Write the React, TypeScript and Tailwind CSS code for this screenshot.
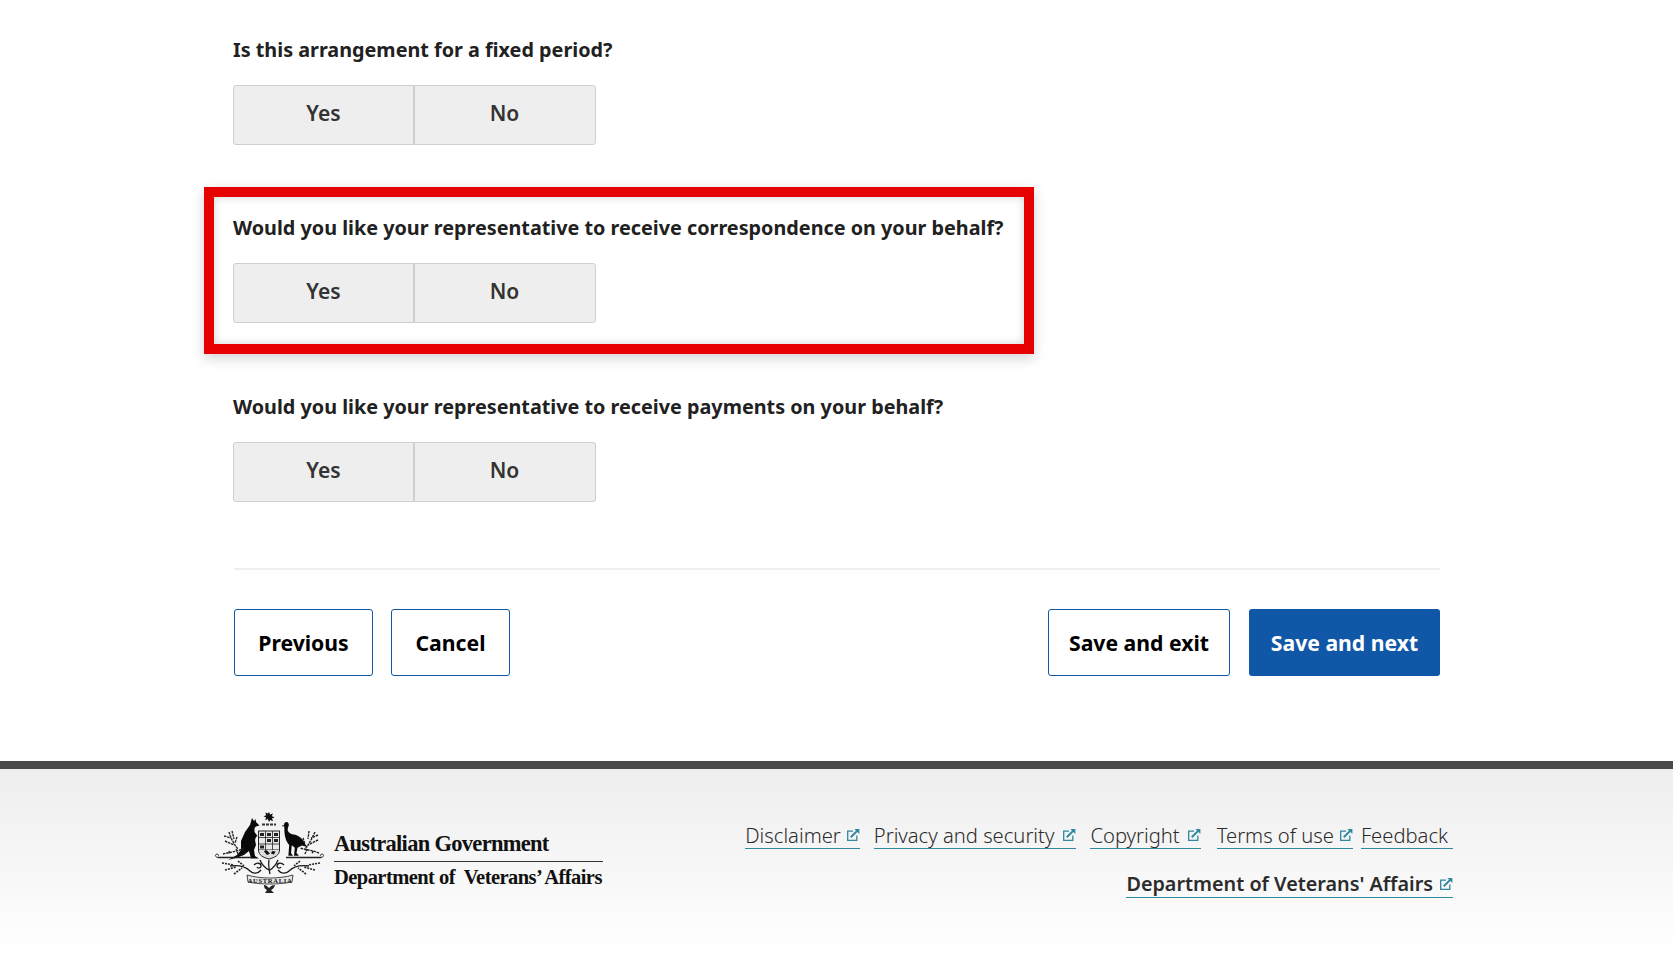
import React from "react";

function ExtIcon({ className = "ml-[6px]" }: { className?: string }) {
  return (
    <svg viewBox="0 0 14 14" className={`inline-block h-[14px] w-[14px] shrink-0 ${className}`} fill="none" stroke="#2f87a0">
      <path d="M7 3.2H1.7v9.1h9.1V7.5" strokeWidth="1.3" />
      <path d="M4.8 9.2 11.6 2.4" strokeWidth="2" />
      <path d="M8.4 1h5v5z" fill="#2f87a0" stroke="none" />
    </svg>
  );
}

function Crest() {
  return (
    <svg viewBox="0 0 120 90" className="h-[90px] w-[120px] shrink-0">
      <path d="M59 7l1.1 2.6 2.7-1.1-.9 2.8 2.7 1-2.6 1.2 1 2.7-2.7-1.1L59 17l-1.2-2.9-2.7 1.1 1-2.7-2.6-1.2 2.7-1-.9-2.8 2.7 1.1z" fill="#111" />
      <path d="M52 19.500h14" stroke="#333" strokeWidth="2" strokeDasharray="3 1" />
      <path d="M42 13L44 16L45.500 14L46 17L49.500 20.500L46 21.500L44.500 23L44.500 27L47.500 31L46 32L45 35L46 40L44 45L45 51L49 53.500L41 53.500L39 46L34 50L26 53L18 55L27 50L31 45L31 36L35 27L40 20Z" fill="#0a0a0a" />
      <path d="M74 20c0-3.200 3.500-4.200 4.600-1.400.8 2-.7 3.200-.9 5.400-.2 2.500 1.200 4 4.300 5.200 5 .4 11 3.500 13 9.800l3 3.200-6-1.800-4.500 2.400-1 5.200 2.500 2.700h-5l.8-8-3-2.400-.8 7.800 2 2.600h-4.600l.8-10.800c-3.400-3.400-5-10.500-4.800-15.500 0-1.400-.1-2.800-.4-3.400z" fill="#0a0a0a" />
      <path d="M75 20.500l-2.800.5" stroke="#0a0a0a" strokeWidth="1" />
      <rect x="48.500" y="26" width="21" height="19" fill="#e8e8e8" stroke="#222" strokeWidth="1" />
      <path d="M48.500 45c0 5 4.500 7.500 10.500 9 6-1.500 10.500-4 10.500-9" fill="#ddd" stroke="#222" />
      <path d="M48.500 32.500h21M48.500 39h21M55.500 26v19M62.500 26v19" stroke="#222" strokeWidth=".8" />
      <path d="M50 28h4v3h-4zM64 28h4v3h-4zM57 34h4v3h-4zM50 40.500h4v3h-4zM64 34h4v3h-4zM57 28h4v3h-4z" fill="#222" />
      <path d="M54 46.500c2-2 3-1 4 0l2 2-3 1.500zM62 46l3.500.5-1.500 3-3-1z" fill="#111" />
      <path d="M8 52.500h34M76 52.500h35" stroke="#222" strokeWidth="1.500" />
      <path d="M8 52.500c-3-.3-3.500-3-1-3.500 1.500 0 2 1.500 1 2.200M111 52.500c3-.3 3.500-3 1-3.500-1.500 0-2 1.500-1 2.200" fill="none" stroke="#222" strokeWidth=".9" />
      <g fill="none" stroke="#222" strokeWidth="1.400" strokeDasharray="2.500 .8">
        <path d="M19 27c2 6 4 11 9 17M15 36l9 4M22 26l2 8M27 32l-2 6M14 31l7 2" />
        <path d="M105 27c-3 6-5 11-10 17M108 35l-10 5M99 26l-1 8M93 33l2 6M108 30l-7 3" />
        <path d="M13 49c7-2 14-2 21-6M26 44l2 5M19 46l1 3" />
        <path d="M109 48c-7-3-13-3-19-5M97 44l-2 5M103 46l-1 3" />
      </g>
      <g fill="none" stroke="#1a1a1a" strokeWidth="1.300">
        <path d="M59 55c-1 5 0 9 1 14M50 55c2 5 5 8 9 10M68 55c-2 5-5 8-8 10" />
        <path d="M20 61c8-1 16 1 20 5 3 3 8 3 11-1M99 61c-8-1-16 1-20 5-3 3-8 3-11-1" />
        <path d="M44 60c3-3 7-2 7 1 0 2-3 3-4 1M74 60c-3-3-7-2-7 1 0 2 3 3 4 1" />
      </g>
      <g fill="none" stroke="#222" strokeWidth="1.600" strokeDasharray="2 1">
        <path d="M12 58l12 2M15 65l11-3M24 69l8-6M28 56l6 5" />
        <path d="M110 58l-12 2M105 65l-11-3M96 69l-8-6M90 56l-6 5" />
      </g>
      <path d="M37 70c7 2 15 3 23 3s16-1 23-3l-1 7c-7 1.500-15 2-22 2s-15-.5-22-2z" fill="#e4e4e4" stroke="#222" strokeWidth=".8" />
      <text x="60" y="77.500" textAnchor="middle" fontSize="6.500" fontFamily="'Liberation Serif', serif" fontWeight="700" letterSpacing=".7" fill="#111">AUSTRALIA</text>
      <path d="M54 80c2 0 3 1 5 3 2-2 3-3 6-3-1 3-2 4-4 5l3 3h-9l2-3c-2-1-3-2-3-5z" fill="#222" />
    </svg>
  );
}

function Question({ title, className = "" }: { title: string; className?: string }) {
  return (
    <div className={`flex flex-col ${className}`}>
      <h3 className="text-[19.8px] leading-[30px] font-bold text-[#212121]">{title}</h3>
      <div className="mt-[20px] flex h-[60px] w-[363px] overflow-hidden rounded-[3px] border border-[#cfcfcf] bg-[#eeeeee] pb-[2px] text-[21px] font-semibold text-[#333333]">
        <span className="-mb-[2px] flex w-[181px] items-center justify-center border-r-2 border-[#cfcfcf] pb-[2px]">Yes</span>
        <span className="flex flex-1 items-center justify-center pr-[1px]">No</span>
      </div>
    </div>
  );
}

function FooterLink({ label, ext = true, className = "", iconClass }: { label: string; ext?: boolean; className?: string; iconClass?: string }) {
  return (
    <a className={`flex h-[27px] items-center border-b border-[#2f87a0] leading-[26px] text-[#2b2b2b] ${className}`}>
      {label}
      {ext && <ExtIcon className={iconClass} />}
    </a>
  );
}

export default function App() {
  return (
    <div className="flex min-h-[957px] w-full flex-col bg-white font-['Noto_Sans','Open_Sans',sans-serif]">
      <main className="ml-[233px] flex w-[1207px] flex-col pt-[35px]">
        <div className="flex flex-col gap-[68px]">
          <Question title="Is this arrangement for a fixed period?" />
          <div className="relative">
            <Question title="Would you like your representative to receive correspondence on your behalf?" />
            <div className="pointer-events-none absolute top-[-26px] left-[-29px] h-[167px] w-[830px] border-[10px] border-[#e60000] shadow-[0_4px_12px_rgba(0,0,0,0.18),inset_0_0_8px_rgba(0,0,0,0.18)]" />
          </div>
          <Question className="mt-[1px]" title="Would you like your representative to receive payments on your behalf?" />
        </div>
        <hr className="mt-[66px] ml-[1px] border-0 border-t-2 border-[#eeeeee]" />
        <div className="mt-[39px] ml-[1px] flex h-[67px] text-[21.2px] font-bold text-black">
          <button className="w-[139px] rounded-[3px] border border-[#1157a7] pt-[1px]">Previous</button>
          <button className="ml-[18px] w-[119px] rounded-[3px] border border-[#1157a7] pt-[1px]">Cancel</button>
          <button className="ml-auto w-[182px] rounded-[3px] border border-[#1157a7] pt-[1px]">Save and exit</button>
          <button className="ml-[19px] w-[191px] rounded-[3px] bg-[#1157a7] pt-[1px] text-white">Save and next</button>
        </div>
      </main>
      <footer className="mt-[85px] flex flex-1 border-t-[8px] border-[#4a4a4a] bg-gradient-to-b from-[#eeeeee] to-white pt-[36px] pl-[210px]">
        <div className="flex h-[90px] w-[1243px] items-start justify-between">
          <div className="flex">
            <Crest />
            <div className="mt-[24px] ml-[4px] flex w-[269px] flex-col font-['Liberation_Serif',serif] font-bold text-[#111]">
              <span className="h-[32px] text-[22.5px] leading-[29px] tracking-[-0.7px]">Australian Government</span>
              <span className="h-[32px] border-t border-[#333] pt-[2px] text-[20.5px] leading-[26px] tracking-[-0.55px] whitespace-nowrap">Department of&nbsp; Veterans’ Affairs</span>
            </div>
          </div>
          <nav className="mt-[17px] flex flex-col items-end">
            <div className="flex text-[20.2px] font-light">
              <FooterLink label="Disclaimer" iconClass="ml-[5px]" />
              <FooterLink className="ml-[14px]" label="Privacy and security" iconClass="ml-[8px]" />
              <FooterLink className="ml-[14px]" label="Copyright" iconClass="ml-[7px]" />
              <FooterLink className="ml-[16px]" label="Terms of use" iconClass="ml-[5px]" />
              <FooterLink className="ml-[8px] pr-[5px]" label="Feedback" ext={false} />
            </div>
            <FooterLink className="mt-[22px] text-[19.8px] font-semibold" label="Department of Veterans' Affairs" />
          </nav>
        </div>
      </footer>
    </div>
  );
}
